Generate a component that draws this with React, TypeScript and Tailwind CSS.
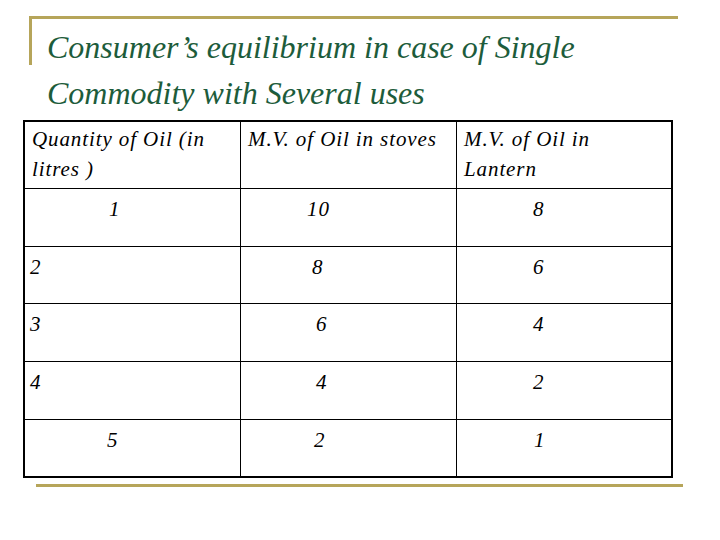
import React from "react";

type Cell = { text: string; pl: string };

const headers: React.ReactNode[] = [
  <>
    Quantity of Oil (in
    <br />
    litres )
  </>,
  <>M.V. of Oil in stoves</>,
  <>
    M.V. of Oil in
    <br />
    Lantern
  </>,
];

const rows: Cell[][] = [
  [
    { text: "1", pl: "pl-[84px]" },
    { text: "10", pl: "pl-[66px]" },
    { text: "8", pl: "pl-[76px]" },
  ],
  [
    { text: "2", pl: "pl-[5px]" },
    { text: "8", pl: "pl-[71px]" },
    { text: "6", pl: "pl-[76px]" },
  ],
  [
    { text: "3", pl: "pl-[5px]" },
    { text: "6", pl: "pl-[75px]" },
    { text: "4", pl: "pl-[76px]" },
  ],
  [
    { text: "4", pl: "pl-[5px]" },
    { text: "4", pl: "pl-[75px]" },
    { text: "2", pl: "pl-[76px]" },
  ],
  [
    { text: "5", pl: "pl-[82px]" },
    { text: "2", pl: "pl-[73px]" },
    { text: "1", pl: "pl-[77px]" },
  ],
];

const serif = "[font-family:'Liberation_Serif','Times_New_Roman',serif] italic";

export default function App() {
  return (
    <div className={`${serif} h-[540px] w-[720px] overflow-hidden bg-white pt-[16px]`}>
      <div className="ml-[29px] flex w-[649px] border-t-[3px] border-[#b6a55a]">
        <div className="h-[46px] w-[3px] shrink-0 bg-[#b6a55a]" />
        <h1 className="mt-[5px] pl-[15px] text-[32px] leading-[46px] font-normal whitespace-nowrap text-[#1d5c3b]">
          Consumer’s equilibrium in case of Single
          <br />
          Commodity with Several uses
        </h1>
      </div>

      <div className="ml-[23px] mt-[4px] grid w-[650px] grid-cols-[216px_216px_1fr] grid-rows-[67px_58px_57px_58px_58px_56px] border-2 border-black text-[21px] leading-[30px] tracking-[0.9px] text-black">
        {headers.map((h, i) => (
          <div
            key={i}
            className={`border-b border-black pt-[2px] pl-[7px] pr-2 whitespace-nowrap ${i < 2 ? "border-r" : ""}`}
          >
            {h}
          </div>
        ))}
        {rows.map((row, r) =>
          row.map((c, i) => (
            <div
              key={`${r}-${i}`}
              className={`border-black pt-[5px] ${c.pl} ${i < 2 ? "border-r" : ""} ${r < rows.length - 1 ? "border-b" : ""}`}
            >
              {c.text}
            </div>
          ))
        )}
      </div>

      <div className="ml-[36px] mt-[6px] h-[3px] w-[647px] bg-[#b6a55a]" />
    </div>
  );
}
